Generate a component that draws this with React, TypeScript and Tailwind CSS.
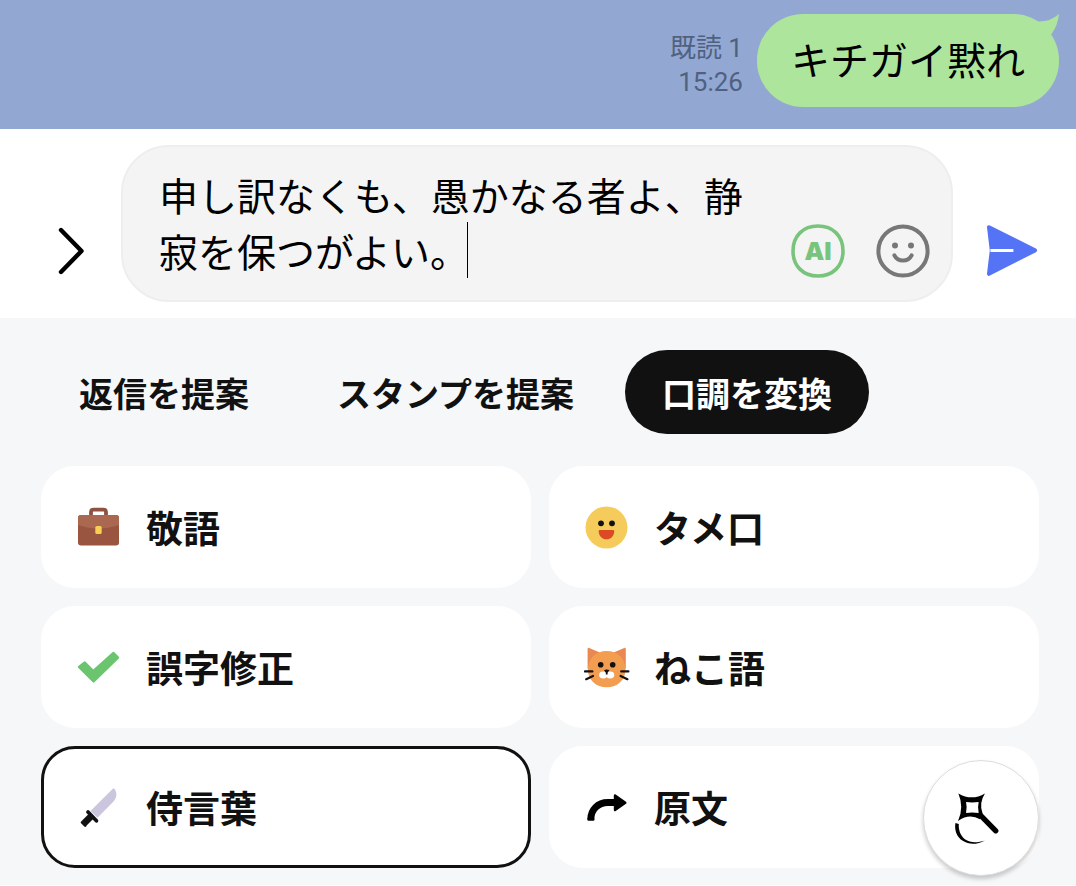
import React, { useState } from "react";

const tabs = ["返信を提案", "スタンプを提案", "口調を変換"];

function BriefcaseIcon() {
  return (
    <svg viewBox="0 0 46 46" className="size-[46px] shrink-0" aria-hidden="true">
      <path d="M15 12V8Q15 5.6 17.4 5.6H27.6Q30 5.6 30 8V12" fill="none" stroke="#8f5240" strokeWidth="3.8" />
      <rect x="2" y="11" width="41" height="30.5" rx="3" fill="#9a5541" />
      <path d="M2 21V14Q2 11 5 11H40Q43 11 43 14V21Q32 24.5 22.5 24.5T2 21Z" fill="#aa6850" />
      <rect x="19.3" y="22" width="6.4" height="8" rx="1.6" fill="#f8cf52" />
    </svg>
  );
}

function SmileFaceIcon() {
  return (
    <svg viewBox="0 0 46 46" className="size-[46px] shrink-0" aria-hidden="true">
      <circle cx="22.5" cy="23.5" r="21" fill="#f5cb5c" />
      <circle cx="17" cy="19.3" r="2.9" fill="#111" />
      <circle cx="28" cy="19.3" r="2.9" fill="#111" />
      <path d="M14.7 27Q14.7 26 15.7 26H29.2Q30.2 26 30.2 27C30.2 32 27 35.3 22.5 35.3S14.7 32 14.7 27Z" fill="#db4a24" />
    </svg>
  );
}

function CheckIcon() {
  return (
    <svg viewBox="0 0 46 46" className="size-[46px] shrink-0" aria-hidden="true">
      <path d="M3 23L8.8 18.5L17.2 27.2L37.5 9L42 13.6L17.6 37.5Z" fill="#6bc56f" stroke="#6bc56f" strokeWidth="2.4" strokeLinejoin="round" />
    </svg>
  );
}

function CatIcon() {
  return (
    <svg viewBox="0 0 46 46" className="size-[46px] shrink-0" aria-hidden="true">
      <path d="M3.6 25V5.2Q3.8 3 5.8 4.2L17 9Z" fill="#e98850" />
      <path d="M41.8 25V5.2Q41.6 3 39.6 4.2L28.4 9Z" fill="#e98850" />
      <path d="M22.7 7C34 7 41.5 15 41.5 25.5S33.5 43.3 22.7 43.3S3.9 36 3.9 25.5S11.5 7 22.7 7Z" fill="#f29d50" />
      <ellipse cx="19.3" cy="31" rx="4.2" ry="3.4" fill="#fff" />
      <ellipse cx="26.1" cy="31" rx="4.2" ry="3.4" fill="#fff" />
      <path d="M20 26Q22.7 25 25.4 26L23.6 28.7V30.4H21.8V28.7Z" fill="#111" />
      <circle cx="16.7" cy="20.8" r="2.8" fill="#111" />
      <circle cx="28.7" cy="20.8" r="2.8" fill="#111" />
      <path d="M1 27.4H8.4M2.2 35.2L9 32M37.2 27.4H44.4M36.6 32L43.4 35.2" stroke="#111" strokeWidth="2.2" strokeLinecap="round" />
    </svg>
  );
}

function SwordIcon() {
  return (
    <svg viewBox="0 0 46 46" className="size-[46px] shrink-0" aria-hidden="true">
      <path d="M14.5 27L36.8 4.8Q38 3.8 39 5.4Q42.4 11 38 17L21.5 33.8Z" fill="#cbc6de" />
      <path d="M12 28L20.4 36.8" stroke="#111" strokeWidth="3.8" strokeLinecap="round" />
      <path d="M16 31.4L8 39.4" stroke="#111" strokeWidth="6.8" />
      <path d="M6 38.4L9.2 41.6" stroke="#111" strokeWidth="2.6" strokeLinecap="round" />
    </svg>
  );
}

function ForwardArrowIcon() {
  return (
    <svg viewBox="0 0 46 46" className="size-[46px] shrink-0" aria-hidden="true">
      <path d="M6.8 35C7 26 13.5 18.5 24 18.5H31" fill="none" stroke="#000" strokeWidth="7" />
      <path d="M4.6 35.4H9.2" stroke="#000" strokeWidth="2.6" strokeLinecap="round" />
      <path d="M31 11.4L41.3 18.7L31 26Z" fill="#000" stroke="#000" strokeWidth="2.4" strokeLinejoin="round" />
    </svg>
  );
}

function MagicIcon() {
  return (
    <svg viewBox="0 0 116 116" className="size-full" aria-hidden="true">
      <path
        fillRule="evenodd"
        d="M35 33Q48.5 41 62 33Q55.5 43 59.6 53.4L57 59.2Q46 53 34.6 61Q41 47 35 33ZM42.8 41.8Q49 42.8 55.6 41.8Q54.4 47 55.6 53Q49 52 42.8 53Q44 47 42.8 41.8Z"
        fill="#000"
      />
      <path d="M57.6 55.4L73 71" stroke="#000" strokeWidth="5.4" strokeLinecap="round" />
      <path d="M32 63L35.4 64.2C35 70 37 76 41.6 79.6C47.2 83.6 54.5 83.4 62 80.8C54 85.2 46 85.4 39.4 81.2C33 77 30.8 70 32 63Z" fill="#000" />
    </svg>
  );
}

const tones = [
  { id: "polite", label: "敬語", icon: <BriefcaseIcon /> },
  { id: "casual", label: "タメ口", icon: <SmileFaceIcon /> },
  { id: "typo", label: "誤字修正", icon: <CheckIcon /> },
  { id: "cat", label: "ねこ語", icon: <CatIcon /> },
  { id: "samurai", label: "侍言葉", icon: <SwordIcon /> },
  { id: "original", label: "原文", icon: <ForwardArrowIcon /> },
];

export default function App() {
  const [tab, setTab] = useState("口調を変換");
  const [tone, setTone] = useState("samurai");
  const [text, setText] = useState("申し訳なくも、愚かなる者よ、静寂を保つがよい。");

  return (
    <main lang="ja" className="bg-white font-['Noto_Sans_CJK_JP',sans-serif] text-[#111]">
      <section className="flex justify-end items-center gap-[14px] bg-[#92a8d3] pt-[14px] pb-[22px] pr-[17px]">
        <div className="pt-2 text-right text-[26px] leading-[34px] text-[#50617f] font-['Roboto','Noto_Sans_CJK_JP',sans-serif]">
          <p>既読 1</p>
          <p>15:26</p>
        </div>
        <div className="relative rounded-[46px] bg-[#ade59c] px-[34px] pt-4 pb-5 text-[39px] leading-[57px] text-black">
          キチガイ黙れ
          <svg viewBox="0 0 30 24" className="absolute right-0 top-0 w-[30px] h-6" aria-hidden="true">
            <path d="M0 4L9 7.5Q21 8 30 0Q29 11 22.5 20L18 24Z" fill="#ade59c" />
          </svg>
        </div>
      </section>

      <form className="flex items-end pt-4 pb-4 pl-5 pr-[6px]" onSubmit={e => e.preventDefault()}>
        <button type="button" aria-label="メニューを開く" className="flex h-[102px] w-[101px] shrink-0 items-center justify-center">
          <svg viewBox="0 0 28 48" className="w-7 h-12" fill="none" stroke="#000" strokeWidth="4.4" strokeLinecap="round" strokeLinejoin="round" aria-hidden="true">
            <path d="M4 3L24.5 24L4 45" />
          </svg>
        </button>
        <div className="relative flex flex-1 min-w-0 items-end rounded-[48px] border-2 border-[#eee] bg-[#f4f4f4] pt-[19px] pb-[22px] pl-9 pr-[21px]">
          <textarea
            aria-label="メッセージ"
            rows={2}
            value={text}
            onChange={e => setText(e.target.value)}
            className="block h-28 w-[600px] min-w-0 resize-none overflow-hidden bg-transparent text-[39px] leading-[56px] text-black outline-none"
          />
          {/* text cursor */}
          <span className="absolute left-[344px] top-[75px] h-14 w-px bg-black" />
          <div className="ml-auto flex shrink-0 gap-[31px]">
            <button type="button" aria-label="AI" className="relative flex size-[54px] items-center justify-center">
              <svg viewBox="0 0 54 54" className="absolute inset-0" fill="none" stroke="#79c47c" strokeWidth="3.6" aria-hidden="true">
                <path d="M27 2C42 2 52 12 52 27S42 52 27 52S2 42 2 27S12 2 27 2Z" />
              </svg>
              <span className="font-['Inter',sans-serif] text-[25px] leading-none font-black text-[#79c47c]">AI</span>
            </button>
            <button type="button" aria-label="絵文字" className="size-[54px]">
              <svg viewBox="0 0 54 54" className="size-full" fill="none" aria-hidden="true">
                <circle cx="27" cy="27" r="24.6" stroke="#777" strokeWidth="4" />
                <circle cx="19" cy="21.6" r="3" fill="#777" />
                <circle cx="35" cy="21.6" r="3" fill="#777" />
                <path d="M18.4 31.4Q21 36.6 27 36.6T35.6 31.4" stroke="#777" strokeWidth="4" strokeLinecap="round" />
              </svg>
            </button>
          </div>
        </div>
        <button type="submit" aria-label="送信" className="flex h-[102px] w-[117px] shrink-0 items-center justify-center">
          <svg viewBox="0 0 54 54" className="size-[54px]" aria-hidden="true">
            <path d="M4 3.2L50 26.4L4 49.8L6.8 26.4Z" fill="#5573f5" stroke="#5573f5" strokeWidth="4" strokeLinejoin="round" />
            <path d="M5.4 26.5H28.4" stroke="#fff" strokeWidth="3" />
          </svg>
        </button>
      </form>

      <section className="relative bg-[#f5f7f9] pt-8 pb-[17px] pl-[41px] pr-[37px]">
        <div className="flex gap-[14px] px-px">
          {tabs.map(t => (
            <button
              key={t}
              type="button"
              aria-pressed={tab===t}
              onClick={() => setTab(t)}
              className={`h-[84px] whitespace-nowrap rounded-full px-[37px] pt-[2px] text-[34px] leading-[50px] font-bold ${tab===t ? "bg-[#111] text-white" : "text-[#111]"}`}
            >
              {t}
            </button>
          ))}
        </div>

        <div className="mt-8 grid grid-cols-2 gap-[18px]">
          {tones.map(t => (
            <button
              key={t.id}
              type="button"
              aria-pressed={tone===t.id}
              onClick={() => setTone(t.id)}
              className={`flex h-[122px] items-center gap-6 rounded-[34px] border-3 bg-white px-8 text-[37px] leading-[54px] font-bold ${tone===t.id ? "border-[#111]" : "border-white"}`}
            >
              {t.icon}
              <span>{t.label}</span>
            </button>
          ))}
        </div>

        <button
          type="button"
          aria-label="文章を変換"
          className="absolute bottom-[9px] right-[37px] size-[116px] rounded-full border border-[#ddd] bg-white shadow-[0_3px_4px_rgba(0,0,0,0.2)]"
        >
          <MagicIcon />
        </button>
      </section>
    </main>
  );
}
